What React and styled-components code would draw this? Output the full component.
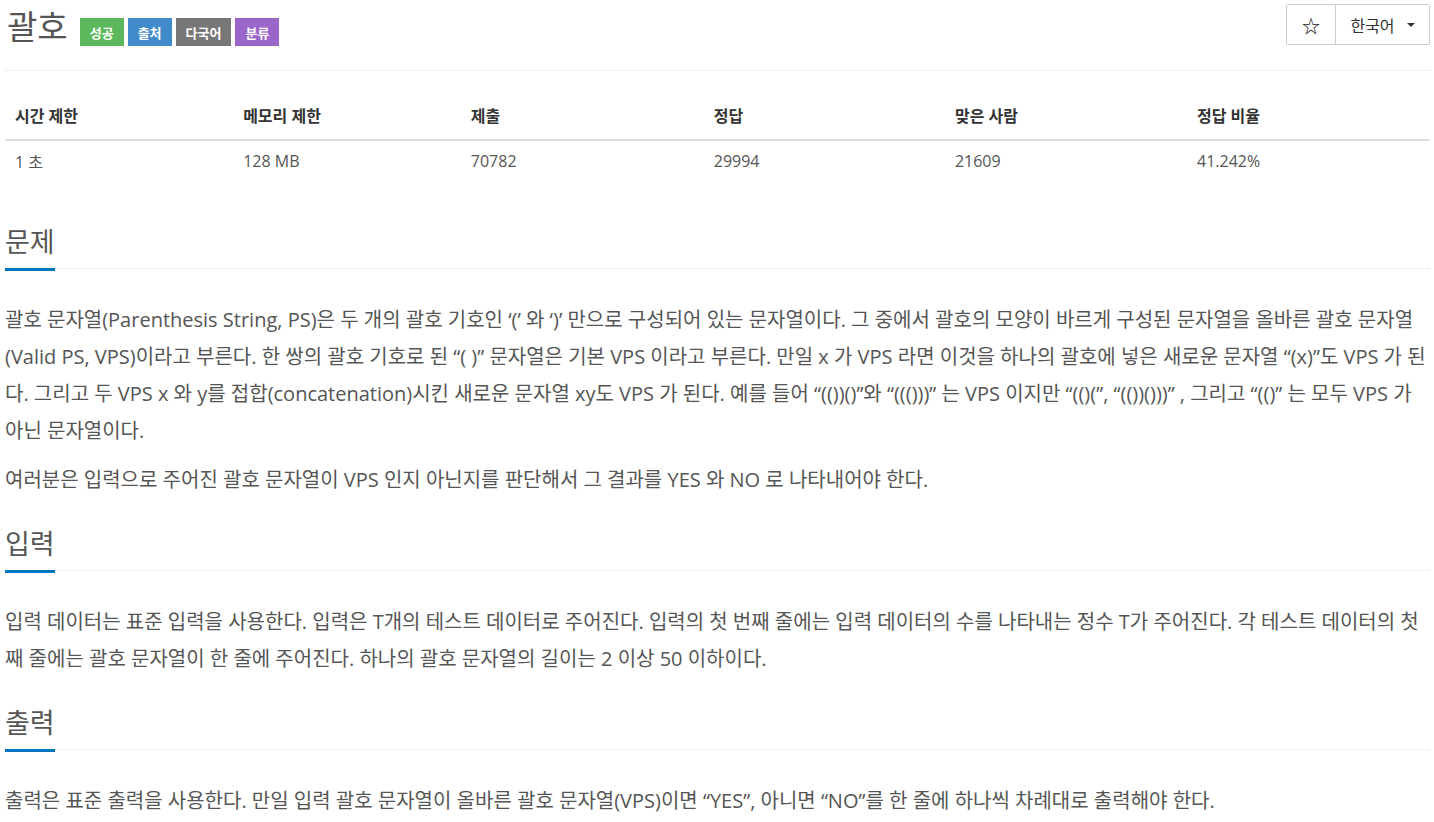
import styled, { createGlobalStyle } from 'styled-components';

const GlobalStyle = createGlobalStyle`
  html, body {
    margin: 0;
    padding: 0;
    background: #fff;
  }
  body {
    font-family: "Open Sans", "Noto Sans CJK KR", sans-serif;
    color: #555;
  }
`;

const Page = styled.div`
  padding: 0 4px 0 5px;
`;

const TitleBar = styled.div`
  display: flex;
  justify-content: space-between;
  align-items: flex-start;
  height: 70px;
  border-bottom: 1px solid #eee;
`;

const TitleLeft = styled.div`
  display: flex;
  align-items: center;
  gap: 4px;
  padding-top: 8px;
`;

const Title = styled.h1`
  margin: 0 8px 0 2px;
  font-size: 33px;
  font-weight: 400;
  line-height: 38px;
  color: #555;
`;

const Badge = styled.span`
  display: inline-flex;
  align-items: center;
  justify-content: center;
  height: 28px;
  padding: 0 10px;
  margin-top: 10px;
  font-size: 13px;
  font-weight: 700;
  color: #fff;
  background: ${p => p.$color};
`;

const ButtonGroup = styled.div`
  display: flex;
  margin-top: 4px;
  border: 1px solid #ccc;
  border-radius: 2px;
  height: 39px;
`;

const GroupButton = styled.button`
  display: flex;
  align-items: center;
  justify-content: center;
  gap: 12px;
  width: ${p => p.$width}px;
  padding: 0;
  border: none;
  border-left: ${p => (p.$first ? 'none' : '1px solid #ccc')};
  background: #fff;
  font-family: "Open Sans", "Noto Sans CJK KR", sans-serif;
  font-size: 16px;
  color: #333;
`;

const Star = styled.span`
  font-family: "Noto Sans CJK KR", sans-serif;
  font-size: 18px;
  color: #111;
`;

const Caret = styled.span`
  width: 0;
  height: 0;
  border-left: 4px solid transparent;
  border-right: 4px solid transparent;
  border-top: 4px solid #333;
`;

const Table = styled.table`
  width: 100%;
  margin: 20px 0 15px;
  border-collapse: collapse;
  font-size: 16px;
`;

const Th = styled.th`
  width: ${p => p.$width}px;
  height: 48px;
  padding: 0 10px;
  text-align: left;
  font-weight: 700;
  color: #333;
  border-bottom: 2px solid #ddd;
`;

const Td = styled.td`
  height: 40px;
  padding: 0 10px;
  color: #555;
`;

const Section = styled.section`
  margin-top: ${p => p.$gap}px;
`;

const Headline = styled.h2`
  display: flex;
  margin: 0;
  border-bottom: 1px dotted #ddd;
  font-size: 27px;
  font-weight: 400;
  color: #555;
`;

const HeadlineText = styled.span`
  line-height: 40px;
  padding-bottom: 6px;
  margin-bottom: -3px;
  border-bottom: 3px solid #0076c0;
`;

const Body = styled.div`
  padding-top: 32px;
`;

const Para = styled.p`
  margin: 0 0 12px;
  font-size: 20px;
  line-height: 37px;
  color: #555;
  &:last-child {
    margin-bottom: 0;
  }
`;

const columns = [
  { label: '시간 제한', value: '1 초', width: 230 },
  { label: '메모리 제한', value: '128 MB', width: 228 },
  { label: '제출', value: '70782', width: 243 },
  { label: '정답', value: '29994', width: 241 },
  { label: '맞은 사람', value: '21609', width: 242 },
  { label: '정답 비율', value: '41.242%', width: 241 },
];

const badges = [
  { text: '성공', color: '#5cb85c' },
  { text: '출처', color: '#428bca' },
  { text: '다국어', color: '#777' },
  { text: '분류', color: '#9b66c9' },
];

export default function App() {
  return (
    <>
      <GlobalStyle />
      <Page>
        <TitleBar>
          <TitleLeft>
            <Title>괄호</Title>
            {badges.map(b => (
              <Badge key={b.text} $color={b.color}>
                {b.text}
              </Badge>
            ))}
          </TitleLeft>
          <ButtonGroup>
            <GroupButton $first $width={48}>
              <Star>☆</Star>
            </GroupButton>
            <GroupButton $width={94}>
              한국어 <Caret />
            </GroupButton>
          </ButtonGroup>
        </TitleBar>

        <Table>
          <thead>
            <tr>
              {columns.map(c => (
                <Th key={c.label} $width={c.width}>
                  {c.label}
                </Th>
              ))}
            </tr>
          </thead>
          <tbody>
            <tr>
              {columns.map(c => (
                <Td key={c.label}>{c.value}</Td>
              ))}
            </tr>
          </tbody>
        </Table>

        <Section $gap={41}>
          <Headline>
            <HeadlineText>문제</HeadlineText>
          </Headline>
          <Body>
            <Para>
              괄호 문자열(Parenthesis String, PS)은 두 개의 괄호 기호인 ‘(’ 와 ‘)’ 만으로 구성되어 있는 문자열이다. 그 중에서 괄호의 모양이 바르게 구성된 문자열을 올바른 괄호 문자열(Valid PS, VPS)이라고 부른다. 한 쌍의 괄호 기호로 된 “( )” 문자열은 기본 VPS 이라고 부른다. 만일 x 가 VPS 라면 이것을 하나의 괄호에 넣은 새로운 문자열 “(x)”도 VPS 가 된다. 그리고 두 VPS x 와 y를 접합(concatenation)시킨 새로운 문자열 xy도 VPS 가 된다. 예를 들어 “(())()”와 “((()))” 는 VPS 이지만 “(()(”, “(())()))” , 그리고 “(()” 는 모두 VPS 가 아닌 문자열이다.
            </Para>
            <Para>
              여러분은 입력으로 주어진 괄호 문자열이 VPS 인지 아닌지를 판단해서 그 결과를 YES 와 NO 로 나타내어야 한다.
            </Para>
          </Body>
        </Section>

        <Section $gap={26}>
          <Headline>
            <HeadlineText>입력</HeadlineText>
          </Headline>
          <Body>
            <Para>
              입력 데이터는 표준 입력을 사용한다. 입력은 T개의 테스트 데이터로 주어진다. 입력의 첫 번째 줄에는 입력 데이터의 수를 나타내는 정수 T가 주어진다. 각 테스트 데이터의 첫째 줄에는 괄호 문자열이 한 줄에 주어진다. 하나의 괄호 문자열의 길이는 2 이상 50 이하이다.
            </Para>
          </Body>
        </Section>

        <Section $gap={26}>
          <Headline>
            <HeadlineText>출력</HeadlineText>
          </Headline>
          <Body>
            <Para>
              출력은 표준 출력을 사용한다. 만일 입력 괄호 문자열이 올바른 괄호 문자열(VPS)이면 “YES”, 아니면 “NO”를 한 줄에 하나씩 차례대로 출력해야 한다.
            </Para>
          </Body>
        </Section>
      </Page>
    </>
  );
}
